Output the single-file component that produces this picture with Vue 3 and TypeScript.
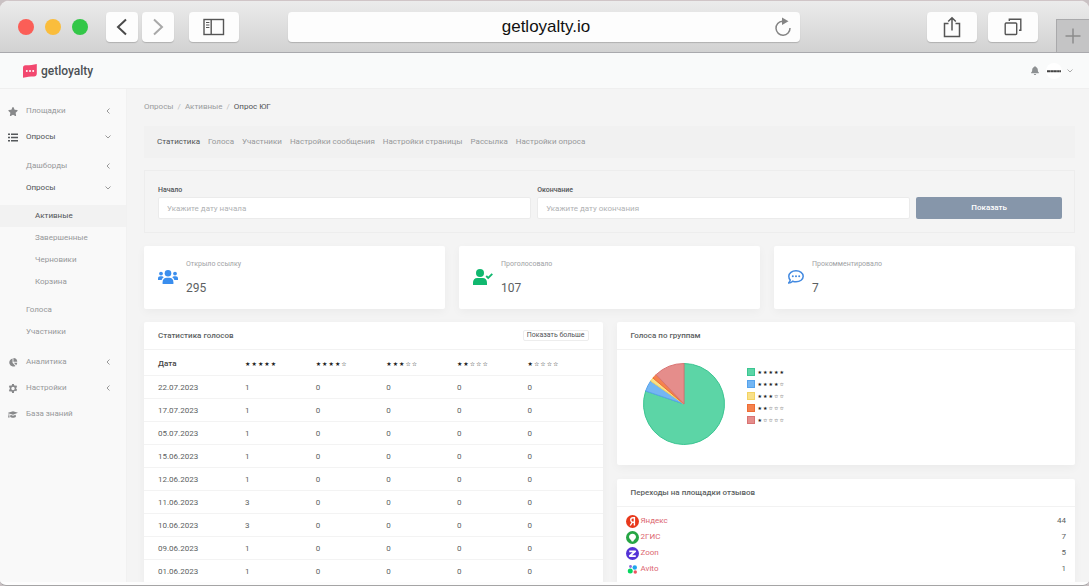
<script setup lang="ts">
import { ref } from 'vue'

interface NavLeaf { label: string; active?: boolean }
interface VoteRow { date: string; votes: number[] }
interface Slice { stars: number; share: number; fill: string; line: string }
interface Source { name: string; icon: string; count: number }

const address = ref('getloyalty.io')
const startDate = ref('')
const endDate = ref('')

const surveyPages: NavLeaf[] = [
  { label: 'Активные', active: true },
  { label: 'Завершенные' },
  { label: 'Черновики' },
  { label: 'Корзина' },
]

const tabs: NavLeaf[] = [
  { label: 'Статистика', active: true },
  { label: 'Голоса' },
  { label: 'Участники' },
  { label: 'Настройки сообщения' },
  { label: 'Настройки страницы' },
  { label: 'Рассылка' },
  { label: 'Настройки опроса' },
]

const ratings = [5, 4, 3, 2, 1]

const rows: VoteRow[] = [
  { date: '22.07.2023', votes: [1, 0, 0, 0, 0] },
  { date: '17.07.2023', votes: [1, 0, 0, 0, 0] },
  { date: '05.07.2023', votes: [1, 0, 0, 0, 0] },
  { date: '15.06.2023', votes: [1, 0, 0, 0, 0] },
  { date: '12.06.2023', votes: [1, 0, 0, 0, 0] },
  { date: '11.06.2023', votes: [3, 0, 0, 0, 0] },
  { date: '10.06.2023', votes: [3, 0, 0, 0, 0] },
  { date: '09.06.2023', votes: [1, 0, 0, 0, 0] },
  { date: '01.06.2023', votes: [1, 0, 0, 0, 0] },
]

const slices: Slice[] = [
  { stars: 5, share: 80.2, fill: '#5cd5a6', line: '#3cc592' },
  { stars: 4, share: 4.4, fill: '#74b6f3', line: '#56a3ec' },
  { stars: 3, share: 1.5, fill: '#f9e088', line: '#f3d362' },
  { stars: 2, share: 1.8, fill: '#f5824e', line: '#ee6d35' },
  { stars: 1, share: 12.1, fill: '#e58d8b', line: '#d97372' },
]

const sources: Source[] = [
  { name: 'Яндекс', icon: 'yandex', count: 44 },
  { name: '2ГИС', icon: 'gis', count: 7 },
  { name: 'Zoon', icon: 'zoon', count: 5 },
  { name: 'Avito', icon: 'avito', count: 1 },
]

const starSigns = (n: number): string[] => Array.from({ length: 5 }, (_, i) => (i < n ? '★' : '☆'))

const point = (share: number): string => {
  const a = (share / 100) * Math.PI * 2
  return `${(42 + 40.5 * Math.sin(a)).toFixed(2)} ${(42 - 40.5 * Math.cos(a)).toFixed(2)}`
}

let passed = 0
const wedges = slices.map((s) => {
  const from = passed
  passed += s.share
  return { ...s, d: `M42 42L${point(from)}A40.5 40.5 0 ${s.share > 50 ? 1 : 0} 1 ${point(passed)}Z` }
})
</script>

<template>
  <div class="window">
    <header class="toolbar">
      <div class="lights">
        <button class="light red" aria-label="Закрыть"></button>
        <button class="light amber" aria-label="Свернуть"></button>
        <button class="light green" aria-label="Развернуть"></button>
      </div>
      <div class="history">
        <button class="tool narrow" aria-label="Назад">
          <svg width="12" height="18" viewBox="0 0 12 18" fill="none" stroke="#4a4a4a" stroke-width="2"><path d="M10 1.5L2 9l8 7.5" /></svg>
        </button>
        <button class="tool narrow" aria-label="Вперед">
          <svg width="12" height="18" viewBox="0 0 12 18" fill="none" stroke="#a9a9a9" stroke-width="2"><path d="M2 1.5L10 9l-8 7.5" /></svg>
        </button>
      </div>
      <button class="tool" aria-label="Боковая панель">
        <svg width="22" height="18" viewBox="0 0 22 18" fill="none" stroke="#555" stroke-width="1.4"><rect x="1" y="1.5" width="19.5" height="15" /><path d="M8.2 1.5v15" /><path d="M3 4.5h3.4M3 7h3.4M3 9.500h3.4" stroke-width="1" /></svg>
      </button>
      <div class="address">
        <input v-model="address" type="text" aria-label="Адрес" />
        <button class="reload" aria-label="Обновить">
          <svg width="18" height="20" viewBox="0 0 18 20" fill="none" stroke="#858585" stroke-width="1.5"><path d="M10.500 4.200H8.500A7 7 0 1 0 16 11" /><path d="M8 .5l6.500 3.700L8 8z" fill="#858585" stroke="none" /></svg>
        </button>
      </div>
      <div class="actions">
        <button class="tool" aria-label="Поделиться">
          <svg width="18" height="22" viewBox="0 0 18 22" fill="none" stroke="#555" stroke-width="1.5"><path d="M5.500 7.500h-4v13h15v-13h-4M9 14.500V2M5.200 5.500L9 1.700l3.800 3.800" /></svg>
        </button>
        <button class="tool" aria-label="Вкладки">
          <svg width="18" height="18" viewBox="0 0 18 18" fill="none" stroke="#555" stroke-width="1.4"><rect x="1.200" y="5" width="11.500" height="11.500" rx="1" /><path d="M5.300 3V1.200h11.500v11H15" /></svg>
        </button>
      </div>
      <button class="new-tab" aria-label="Новая вкладка">
        <svg width="16" height="16" viewBox="0 0 16 16" stroke="#8c8c8c" stroke-width="1.500"><path d="M8 .5v15M.5 8h15" /></svg>
      </button>
    </header>

    <div class="page">
      <div class="topbar">
        <a class="brand" href="#">
          <svg width="14" height="14" viewBox="0 0 14 14"><path d="M2.500 1.300C6 1.400 10 1 13.800 0v9.500c0 2-1 3-2.800 3-4 0-7 .2-11 1.300V4c0-1.800.8-2.700 2.500-2.700z" fill="#f2486f" /><g fill="#fff"><circle cx="3.800" cy="7" r="1" /><circle cx="7" cy="7" r="1" /><circle cx="10.200" cy="7" r="1" /></g></svg>
          <span>getloyalty</span>
        </a>
        <div class="account">
          <button class="bare" aria-label="Уведомления">
            <svg width="8" height="9" viewBox="0 0 448 512" fill="#8d9092"><path d="M224 512c35 0 64-29 64-64H160c0 35 29 64 64 64zm215-150c-19-21-55-52-55-154 0-78-54-140-128-155V32a32 32 0 0 0-64 0v21C118 68 64 130 64 208c0 102-36 133-55 154-6 6-9 14-9 22 0 16 13 32 32 32h384c19 0 32-16 32-32 0-8-3-16-9-22z" /></svg>
          </button>
          <button class="bare profile" aria-label="Профиль">
            <svg width="16" height="16" viewBox="0 0 16 16"><circle cx="8" cy="8" r="8" fill="#fff" /><path d="M1 8.300h14" stroke="#444" stroke-width="2" stroke-dasharray="3.400 .3 2.500 .2" /></svg>
            <svg width="6" height="4" viewBox="0 0 6 4" fill="none" stroke="#aaa"><path d="M.5.5L3 3 5.500.5" /></svg>
          </button>
        </div>
      </div>

      <div class="body">
        <nav class="sidebar">
          <a class="item" href="#">
            <svg class="glyph" viewBox="0 0 576 512"><path d="M259.300 17.800L194 150.200 47.900 171.500c-26.200 3.800-36.700 36.100-17.700 54.600l105.700 103-25 145.500c-4.500 26.300 23.200 46 46.400 33.700L288 439.600l130.700 68.700c23.200 12.200 50.900-7.400 46.400-33.700l-25-145.500 105.700-103c19-18.500 8.500-50.800-17.700-54.600L382 150.200 316.700 17.800c-11.700-23.600-45.600-23.900-57.400 0z" /></svg>
            <span>Площадки</span>
            <svg class="left" viewBox="0 0 4 6"><path d="M3.500.5L1 3l2.500 2.500" /></svg>
          </a>
          <a class="item open" href="#">
            <svg class="glyph" viewBox="0 0 10 8"><path d="M0 0h2v1.500H0zM3 0h7v1.500H3zM0 3.200h2v1.500H0zM3 3.200h7v1.500H3zM0 6.400h2v1.500H0zM3 6.400h7v1.500H3z" /></svg>
            <span>Опросы</span>
            <svg class="down" viewBox="0 0 6 4"><path d="M.5.5L3 3 5.500.5" /></svg>
          </a>
          <div class="group second">
            <a class="item" href="#"><span>Дашборды</span><svg class="left" viewBox="0 0 4 6"><path d="M3.500.5L1 3l2.500 2.500" /></svg></a>
            <a class="item open" href="#"><span>Опросы</span><svg class="down" viewBox="0 0 6 4"><path d="M.5.5L3 3 5.500.5" /></svg></a>
            <div class="group third">
              <a v-for="p in surveyPages" :key="p.label" class="item" :class="{ current: p.active }" href="#"><span>{{ p.label }}</span></a>
            </div>
            <a class="item" href="#"><span>Голоса</span></a>
            <a class="item" href="#"><span>Участники</span></a>
          </div>
          <a class="item" href="#">
            <svg class="glyph" viewBox="0 0 20 20"><path d="M9 1v9.500l6.500 7A9 9 0 1 1 9 1z" /><path d="M11 0a9 9 0 0 1 8.500 8.500H11z" /><path d="M12 10.500h7.500a9 9 0 0 1-2.500 5.500z" /></svg>
            <span>Аналитика</span>
            <svg class="left" viewBox="0 0 4 6"><path d="M3.500.5L1 3l2.500 2.500" /></svg>
          </a>
          <a class="item" href="#">
            <svg class="glyph" viewBox="0 0 20 20"><path fill-rule="evenodd" d="M8 0h4l.6 2.700 1.900 1.100 2.700-.9 2 3.500-2.100 1.900v2.400l2.100 1.900-2 3.500-2.700-.9-1.900 1.100L12 20H8l-.6-2.700-1.900-1.100-2.700.9-2-3.500 2.100-1.900V8.300L.8 6.400l2-3.500 2.700.9 1.900-1.100zM10 6.200a3.800 3.800 0 1 0 0 7.600 3.800 3.800 0 0 0 0-7.600z" /></svg>
            <span>Настройки</span>
            <svg class="left" viewBox="0 0 4 6"><path d="M3.500.5L1 3l2.500 2.500" /></svg>
          </a>
          <a class="item" href="#">
            <svg class="glyph" viewBox="0 0 24 20"><path d="M12 2l12 4-12 4.500L3 7.500v3L4 17H0l1.500-6.500V7L0 6z" /><path d="M6 10.500l6 2.200 6.500-2.400.5 5c-3 3.500-11 3.500-14 0z" /></svg>
            <span>База знаний</span>
          </a>
        </nav>

        <main class="main">
          <nav class="crumbs" aria-label="Путь">
            <a href="#">Опросы</a><i>/</i><a href="#">Активные</a><i>/</i><b>Опрос ЮГ</b>
          </nav>

          <nav class="tabs" aria-label="Разделы">
            <a v-for="t in tabs" :key="t.label" href="#" :class="{ current: t.active }">{{ t.label }}</a>
          </nav>

          <form class="filter" @submit.prevent>
            <div class="field">
              <label for="start">Начало</label>
              <input id="start" v-model="startDate" type="text" placeholder="Укажите дату начала" />
            </div>
            <div class="field">
              <label for="end">Окончание</label>
              <input id="end" v-model="endDate" type="text" placeholder="Укажите дату окончания" />
            </div>
            <button type="submit">Показать</button>
          </form>

          <section class="stats">
            <article class="card stat">
              <svg width="20" height="16" viewBox="0 0 20 16" fill="#3a8eee"><circle cx="10" cy="4.200" r="3.300" /><path d="M4.600 15v-1.800c0-2.700 1.600-4.400 4-4.400h2.800c2.400 0 4 1.700 4 4.400V15z" /><circle cx="3" cy="4.600" r="1.900" /><circle cx="17" cy="4.600" r="1.900" /><path d="M0 11V9.400C0 8 .9 7.200 2.200 7.200h1.600c.8 0 1.500.4 1.900 1C4.500 9 3.900 10 3.700 11zM20 11V9.400c0-1.400-.9-2.200-2.200-2.200h-1.600c-.8 0-1.500.4-1.900 1 1.200.8 1.800 1.800 2 2.800z" /></svg>
              <div><h3>Открыло ссылку</h3><p>295</p></div>
            </article>
            <article class="card stat">
              <svg width="20" height="16" viewBox="0 0 20 16" fill="#10b86f"><circle cx="7" cy="4" r="4" /><path d="M0 16v-2.500C0 10.800 1.800 9 4.200 9h5.600c2.400 0 4.200 1.800 4.200 4.500V16z" /><path d="M13.200 7l2 2L19.300 4.800" fill="none" stroke="#10b86f" stroke-width="1.800" /></svg>
              <div><h3>Проголосовало</h3><p>107</p></div>
            </article>
            <article class="card stat">
              <svg width="16" height="16" viewBox="1 0 16 16"><path d="M9 1.800c4 0 7.200 2.300 7.200 5.500S13 12.800 9 12.800c-1.200 0-2.300-.2-3.300-.6-1 .9-2.400 1.700-4 1.700.8-.8 1.300-1.700 1.500-2.800C2.200 10 1.800 8.700 1.800 7.300 1.800 4.100 5 1.800 9 1.800z" fill="none" stroke="#4289e0" stroke-width="1.500" /><g fill="#4289e0"><circle cx="5.800" cy="7.300" r="1" /><circle cx="9" cy="7.300" r="1" /><circle cx="12.200" cy="7.300" r="1" /></g></svg>
              <div><h3>Прокомментировало</h3><p>7</p></div>
            </article>
          </section>

          <section class="columns">
            <article class="card">
              <div class="head"><h2>Статистика голосов</h2><button type="button">Показать больше</button></div>
              <table>
                <thead>
                  <tr>
                    <th scope="col">Дата</th>
                    <th v-for="r in ratings" :key="r" scope="col"><span class="rating"><span v-for="(s, i) in starSigns(r)" :key="i">{{ s }}</span></span></th>
                  </tr>
                </thead>
                <tbody>
                  <tr v-for="row in rows" :key="row.date">
                    <td>{{ row.date }}</td>
                    <td v-for="(v, i) in row.votes" :key="i">{{ v }}</td>
                  </tr>
                </tbody>
              </table>
            </article>

            <div class="stack">
              <article class="card">
                <div class="head"><h2>Голоса по группам</h2></div>
                <div class="chart">
                  <svg width="84" height="84" viewBox="0 0 84 84" role="img" aria-label="Голоса по группам">
                    <path v-for="w in wedges" :key="w.stars" :d="w.d" :fill="w.fill" :stroke="w.line" stroke-linejoin="round" />
                  </svg>
                  <ul class="legend">
                    <li v-for="s in slices" :key="s.stars">
                      <svg width="8" height="8" viewBox="0 0 8 8"><rect x=".5" y=".5" width="7" height="7" :fill="s.fill" :stroke="s.line" /></svg>
                      <span class="rating small"><span v-for="(c, i) in starSigns(s.stars)" :key="i">{{ c }}</span></span>
                    </li>
                  </ul>
                </div>
              </article>

              <article class="card grow">
                <div class="head"><h2>Переходы на площадки отзывов</h2></div>
                <ul class="sources">
                  <li v-for="s in sources" :key="s.name">
                    <a href="#">
                      <svg v-if="s.icon === 'yandex'" width="13" height="13" viewBox="0 0 26 26"><circle cx="13" cy="13" r="13" fill="#e8391c" /><path d="M16.800 21V5.500h-2.600c-3 0-4.700 1.800-4.700 4.300 0 2.200 1 3.300 3 4.700L8.500 21M16.500 14.500h-4" fill="none" stroke="#fff" stroke-width="2.800" /></svg>
                      <svg v-else-if="s.icon === 'gis'" width="13" height="13" viewBox="0 0 26 26"><circle cx="13" cy="13" r="13" fill="#26a544" /><path d="M13 5.500c4.200 0 7 2.700 7 6.300 0 4-4.500 4.700-5.500 9.200h-3C10.500 16.500 6 15.800 6 11.800c0-3.600 2.800-6.300 7-6.300z" fill="#fff" /></svg>
                      <svg v-else-if="s.icon === 'zoon'" width="13" height="13" viewBox="0 0 26 26"><circle cx="13" cy="13" r="13" fill="#5433d6" /><path d="M6.500 8.500h12L7.500 18h12" fill="none" stroke="#fff" stroke-width="3.500" stroke-linejoin="round" /></svg>
                      <svg v-else width="13" height="13" viewBox="0 0 26 26"><circle cx="8.500" cy="16" r="5" fill="#06d65f" /><circle cx="17.500" cy="9" r="4.500" fill="#1ea4ee" /><circle cx="9" cy="7" r="2.800" fill="#8f6bd8" /><circle cx="18.500" cy="18" r="3.500" fill="#ee5361" /></svg>
                      <span>{{ s.name }}</span>
                    </a>
                    <b>{{ s.count }}</b>
                  </li>
                </ul>
              </article>
            </div>
          </section>
        </main>
      </div>
    </div>
  </div>
</template>

<style>
html,
body {
  background: #c9c1c3;
}
</style>

<style scoped>
.window,
.window * {
  box-sizing: border-box;
}

.window {
  display: flex;
  flex-direction: column;
  height: 100vh;
  overflow: hidden;
  padding-bottom: 3px;
  border-top: 1px solid #d0c5c7;
  border-bottom: 1px solid #a5a4a5;
  border-radius: 9px 9px 6px 6px;
  background: #fdfdfd;
  color: #5c5f62;
  font: 8px/14px Roboto, "Noto Sans", sans-serif;
}

a {
  color: inherit;
  text-decoration: none;
}

button,
input {
  font: inherit;
}

button {
  padding: 0;
  border: 0;
  background: none;
}

svg {
  display: block;
  flex: none;
}

h2,
h3,
p,
ul {
  margin: 0;
  padding: 0;
  list-style: none;
}

/* browser toolbar */
.toolbar {
  display: flex;
  flex: none;
  align-items: center;
  height: 52px;
  padding-left: 18px;
  border-bottom: 1px solid #a9a9ad;
  background: linear-gradient(#ebebeb, #d2d2d2);
}

.lights {
  display: flex;
  gap: 11px;
}

.light {
  width: 16px;
  height: 16px;
  border-radius: 50%;
}

.red { background: #fb5e57; }
.amber { background: #fabd3c; }
.green { background: #33c748; }

.history {
  display: flex;
  gap: 4px;
  margin: 0 15px 0 18px;
}

.tool {
  display: flex;
  align-items: center;
  justify-content: center;
  width: 50px;
  height: 30px;
  border-radius: 4px;
  background: #fdfdfd;
  box-shadow: 0 1px 1px rgba(0, 0, 0, 0.18);
}

.narrow {
  width: 32px;
}

.address {
  display: flex;
  flex: 1;
  align-items: center;
  height: 30px;
  margin: 0 127px 0 49px;
  padding: 0 8px 0 30px;
  border-radius: 4px;
  background: #fdfdfd;
  box-shadow: 0 1px 1px rgba(0, 0, 0, 0.18);
}

.address input {
  flex: 1;
  min-width: 0;
  border: 0;
  outline: 0;
  background: none;
  color: #111;
  font: 17px/24px "Liberation Sans", Arial, sans-serif;
  text-align: center;
}

.actions {
  display: flex;
  gap: 11px;
  margin-right: 18px;
}

.new-tab {
  display: flex;
  align-items: center;
  justify-content: center;
  align-self: flex-end;
  width: 33px;
  height: 33px;
  border-top: 1px solid #a9a9ab;
  border-left: 1px solid #a9a9ab;
  background: #c4c4c5;
}

/* site */
.page {
  display: flex;
  flex: 1;
  flex-direction: column;
  min-height: 0;
  overflow: hidden;
}

.topbar {
  display: flex;
  flex: none;
  align-items: center;
  justify-content: space-between;
  height: 36px;
  padding: 0 16px 0 23px;
  border-bottom: 1px solid #efefef;
  background: #f9fafa;
}

.brand {
  display: flex;
  align-items: center;
  gap: 4px;
  color: #4b5054;
  font-size: 12px;
  font-weight: 500;
}

.account,
.profile {
  display: flex;
  align-items: center;
}

.account { gap: 7px; }
.profile { gap: 5px; }

.body {
  display: flex;
  flex: 1;
  min-height: 0;
}

.sidebar {
  flex: none;
  width: 127px;
  padding-top: 9px;
  border-right: 1px solid #f1f1f1;
  background: #f9f9f9;
  color: #96989a;
}

.item {
  display: flex;
  align-items: center;
  height: 26px;
  padding: 0 15px 0 8px;
}

.item span {
  flex: 1;
}

.glyph {
  width: 10px;
  height: 9px;
  margin-right: 8px;
  fill: #88898b;
}

.open,
.current {
  color: #505356;
}

.open .glyph {
  fill: #55585b;
}

.left,
.down {
  fill: none;
  stroke: #999;
}

.left {
  width: 4px;
  height: 6px;
  margin-right: 1px;
}

.down {
  width: 6px;
  height: 4px;
}

.second {
  padding: 5px 0 6px;
}

.second .item {
  height: 22px;
  padding-left: 26px;
}

.third {
  padding: 6px 0;
}

.third .item {
  padding-left: 35px;
}

.third .current {
  background: #f2f2f2;
}

.main {
  flex: 1;
  min-width: 0;
  padding: 11px 14px 0 17px;
  background: #f4f4f4;
}

.crumbs {
  display: flex;
  gap: 4px;
  color: #999b9d;
}

.crumbs i {
  color: #bbb;
  font-style: normal;
}

.crumbs b {
  color: #505356;
  font-weight: 400;
}

.tabs {
  display: flex;
  align-items: center;
  gap: 8px;
  height: 32px;
  margin-top: 12px;
  padding: 0 13px;
  background: #f1f1f1;
  color: #96989a;
}

.filter {
  display: grid;
  grid-template-columns: repeat(12, 1fr);
  gap: 6px;
  align-items: end;
  margin-top: 12px;
  padding: 12px 12px 13px 13px;
  border: 1px solid #ededed;
}

.field {
  display: flex;
  flex-direction: column;
  grid-column: span 5;
  color: #505356;
  font-size: 7px;
  font-weight: 500;
}

.field input {
  width: 100%;
  height: 22px;
  padding: 0 8px;
  border: 1px solid #ebebeb;
  border-radius: 2px;
  outline: 0;
  background: #fff;
  font-size: 8px;
  font-weight: 400;
}

.field input::placeholder {
  color: #b0b2b4;
  opacity: 1;
}

.filter button {
  grid-column: span 2;
  height: 22px;
  border-radius: 2px;
  background: #8696aa;
  color: #fff;
  font-size: 8px;
  font-weight: 500;
}

.card {
  border-radius: 2px;
  background: #fff;
  box-shadow: 0 3px 10px rgba(0, 0, 0, 0.04);
}

.stats {
  display: grid;
  grid-template-columns: repeat(3, 1fr);
  gap: 14px;
  margin-top: 13px;
}

.stat {
  display: flex;
  align-items: center;
  gap: 8px;
  height: 63px;
  padding: 0 14px 2px;
}

.stat h3 {
  color: #a0a2a4;
  font-size: 7px;
  font-weight: 400;
  line-height: 14px;
}

.stat p {
  margin-top: 8px;
  font-size: 12px;
  line-height: 18px;
}

.columns {
  display: grid;
  grid-template-columns: repeat(2, minmax(0, 1fr));
  gap: 14px;
  margin-top: 13px;
}

.stack {
  display: flex;
  flex-direction: column;
  gap: 14px;
}

.grow {
  flex: 1;
}

.head {
  display: flex;
  align-items: center;
  justify-content: space-between;
  height: 28px;
  padding: 0 14px;
  border-bottom: 1px solid #f2f2f2;
}

.head h2 {
  font-size: 8px;
  font-weight: 500;
}

.head button {
  height: 11px;
  padding: 0 3px;
  border: 1px solid #ededed;
  border-radius: 2px;
  color: #505356;
  font-size: 7px;
  line-height: 9px;
}

table {
  width: 100%;
  border-collapse: separate;
  border-spacing: 0;
  table-layout: fixed;
}

th,
td {
  height: 23px;
  padding: 1px 0 0 14px;
  border-bottom: 1px solid #f3f3f3;
  font-weight: 400;
  text-align: left;
}

th {
  width: 15.4%;
  height: 26px;
  padding-top: 3px;
  color: #444;
  font-weight: 500;
}

th:first-child {
  width: 19%;
}

th:last-child {
  width: auto;
}

.rating {
  display: flex;
  gap: 1px;
  color: #222;
  font: 6px/12px "DejaVu Sans", sans-serif;
}

.small {
  font-size: 5px;
}

.chart {
  display: flex;
  gap: 21px;
  padding: 12px 25px 19px;
}

.legend {
  display: flex;
  flex-direction: column;
  padding-top: 4px;
}

.legend li {
  display: flex;
  align-items: center;
  gap: 3px;
  height: 12px;
}

.sources {
  padding: 6px 9px;
}

.sources li {
  display: flex;
  align-items: center;
  justify-content: space-between;
  height: 16px;
}

.sources a {
  display: flex;
  align-items: center;
  gap: 2px;
  color: #dc6670;
}

.sources b {
  font-weight: 400;
}
</style>
